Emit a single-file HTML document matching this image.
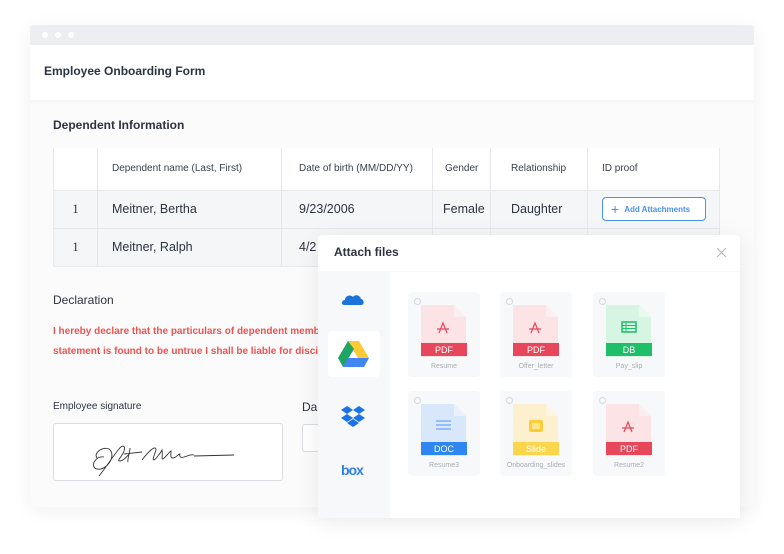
<!DOCTYPE html>
<html><head><meta charset="utf-8"><style>
*{margin:0;padding:0;box-sizing:border-box}
body{width:784px;height:554px;background:#fff;font-family:"Liberation Sans",sans-serif;position:relative;overflow:hidden;color:#2d3340}
.a{position:absolute}
.win{left:30px;top:25px;width:724px;height:482px;background:#fbfbfc;box-shadow:0 4px 20px rgba(0,0,0,.06);border-radius:3px}
.bar{left:30px;top:25px;width:724px;height:20px;background:#eceef1;border-radius:3px 3px 0 0}
.dot{width:6px;height:6px;border-radius:50%;background:#fff;top:32px}
.hdr{left:30px;top:45px;width:724px;height:55px;background:#fff;box-shadow:0 2px 4px rgba(0,0,0,.03)}
table{position:absolute;left:53px;top:148px;border-collapse:collapse;font-size:10.5px}
td{border:1px solid #e6e8eb;padding:0 0 0 14px;height:38px}
tr.h td{background:#fff;height:42px;border-top:none;color:#3a404b;font-size:10px}
tr.r td{background:#f4f6f7;font-size:12.5px;color:#2d3340}
td.n{text-align:center;padding:0;font-family:"Liberation Serif",serif;font-size:12px}
.card{width:72px;height:85px;background:#f7f8f9;border-radius:4px}
.card .rad{position:absolute;left:6px;top:6px;width:7px;height:7px;border:1px solid #d5d8dc;border-radius:50%}
.card .lbl{position:absolute;left:0;width:100%;top:71px;text-align:center;font-size:7px;color:#a8adb3}
</style></head><body>
<div class="a win"></div>
<div class="a bar"></div>
<div class="a dot" style="left:42px"></div><div class="a dot" style="left:55px"></div><div class="a dot" style="left:68px"></div>
<div class="a hdr"></div>
<div class="a" style="left:44px;top:64px;font-size:12px;font-weight:bold;color:#2d3340">Employee Onboarding Form</div>
<div class="a" style="left:53px;top:118px;font-size:12px;font-weight:bold">Dependent Information</div>
<table>
<tr class="h"><td style="width:44px;padding:0"></td><td style="width:184px">Dependent name (Last, First)</td><td style="width:151px;padding-left:17px">Date of birth (MM/DD/YY)</td><td style="width:58px;padding-left:12px">Gender</td><td style="width:97px;padding-left:20px">Relationship</td><td style="width:132px">ID proof</td></tr>
<tr class="r"><td class="n">1</td><td>Meitner, Bertha</td><td style="padding-left:17px">9/23/2006</td><td style="padding-left:10px">Female</td><td style="padding-left:20px">Daughter</td><td><div style="width:104px;height:24px;border:1px solid #4a90f2;border-radius:4px;background:#fff;color:#4a90f2;font-size:8px;font-weight:bold;line-height:22px;padding-left:8px"><span style="font-size:14px;font-weight:normal;vertical-align:-2px;margin-right:5px">+</span>Add Attachments</div></td></tr>
<tr class="r"><td class="n">1</td><td>Meitner, Ralph</td><td style="padding-left:17px">4/2</td><td></td><td></td><td></td></tr>
</table>
<div class="a" style="left:53px;top:293px;font-size:12px;color:#2d3340">Declaration</div>
<div class="a" style="left:53px;top:322px;font-size:10px;color:#f0524f;line-height:20px;font-weight:bold;white-space:nowrap;width:265px;overflow:hidden">I hereby declare that the particulars of dependent members<br>statement is found to be untrue I shall be liable for disciplinary</div>
<div class="a" style="left:53px;top:401px;font-size:10px">Employee signature</div>
<div class="a" style="left:302px;top:400px;font-size:12px">Da</div>
<div class="a" style="left:53px;top:423px;width:230px;height:58px;border:1px solid #d8dbe0;border-radius:3px;background:#fff">
<svg width="230" height="58" viewBox="0 0 230 58"><path d="M50 33c-8 -2 -15 10 -7 12c10 2 20 -14 12 -20c-6 -3 -16 4 -12 9M45 52c8 -10 14 -20 20 -27c3 -4 7 -4 5 2c-2 6 -8 10 -4 10c4 0 8 -6 10 -8M76 24c0 4 -3 12 -2 14M70 30l18 -2M88 36c6 -8 14 -16 14 -10c-2 6 -4 10 -2 10c3 -2 7 -8 8 -10c1 6 -1 9 1 9c3 -2 6 -7 8 -8c0 5 -1 7 2 7c3 0 5 -4 7 -4c-1 3 1 4 4 3c4 -1 6 -3 10 -2M140 32l40 -1" fill="none" stroke="#333" stroke-width="0.9"/></svg></div>
<div class="a" style="left:302px;top:424px;width:20px;height:28px;border:1px solid #d8dbe0;border-right:none;border-radius:3px 0 0 3px;background:#fff"></div>

<!-- dialog -->
<div class="a" style="left:318px;top:235px;width:422px;height:283px;background:#f7f8fa;box-shadow:0 4px 24px rgba(0,0,0,.08);border-radius:4px"></div>
<div class="a" style="left:318px;top:235px;width:422px;height:36px;background:#fff;border-radius:4px 4px 0 0"></div>
<div class="a" style="left:334px;top:245px;font-size:12px;font-weight:bold">Attach files</div>
<svg class="a" style="left:716px;top:247px" width="11" height="11"><path d="M1 1L10 10M10 1L1 10" stroke="#b8bcc2" stroke-width="1.2"/></svg>
<div class="a" style="left:390px;top:272px;width:350px;height:246px;background:#fff"></div>
<!-- sidebar icons -->
<svg class="a" style="left:341px;top:290px" width="24" height="16" viewBox="0 0 24 16"><path d="M3 15c-3 0 -3 -5 1 -5c0 -4 5 -6 8 -3c2 -3 7 -2 8 2c3 0 4 6 0 6z" fill="#1a73d9"/></svg>
<div class="a" style="left:328px;top:331px;width:52px;height:46px;background:#fff;border-radius:4px"></div>
<svg class="a" style="left:338px;top:340px" width="32" height="28" viewBox="0 0 32 28"><path d="M10 1h11l10 17h-11z" fill="#fdc935"/><path d="M10 1L0 18l5 9l11-18z" fill="#1fa463"/><path d="M5 27h21l5-9H10z" fill="#4285f4"/></svg>
<svg class="a" style="left:341px;top:406px" width="24" height="22" viewBox="0 0 24 22"><path d="M6 0l6 4-6 4-6-4zM18 0l6 4-6 4-6-4zM6 8l6 4-6 4-6-4zM18 8l6 4-6 4-6-4zM12 13l6 4-6 4-6-4z" fill="#1a73e8"/></svg>
<div class="a" style="left:341px;top:462px;font-size:14px;font-weight:bold;color:#2f80ed;letter-spacing:-1px">box</div>

<!-- cards -->
<div id="cards"></div>
<svg width="0" height="0" style="position:absolute"><defs>
<path id="pdf" d="M-4 6L0-4L4 6M-6 2h12" fill="none" stroke="#e8465b" stroke-width="1.2"/>
</defs></svg>
<!-- card template built inline -->
<div class="a card" style="left:408px;top:292px"><div class="rad"></div><svg class="a" style="left:13px;top:13px" width="46" height="52"><path d="M0 0h33l12 12v52H0z" fill="#fbe3e6"/><path d="M33 0v12h12" fill="#fdeff1"/><rect y="38" width="46" height="13" fill="#e8465b"/><text x="23" y="48" font-size="9" fill="#fff" text-anchor="middle" font-family="Liberation Sans">PDF</text><use href="#pdf" x="22" y="22"/></svg><div class="lbl">Resume</div></div>
<div class="a card" style="left:500px;top:292px"><div class="rad"></div><svg class="a" style="left:13px;top:13px" width="46" height="52"><path d="M0 0h33l12 12v52H0z" fill="#fbe3e6"/><path d="M33 0v12h12" fill="#fdeff1"/><rect y="38" width="46" height="13" fill="#e8465b"/><text x="23" y="48" font-size="9" fill="#fff" text-anchor="middle" font-family="Liberation Sans">PDF</text><use href="#pdf" x="22" y="22"/></svg><div class="lbl">Offer_letter</div></div>
<div class="a card" style="left:593px;top:292px"><div class="rad"></div><svg class="a" style="left:13px;top:13px" width="46" height="52"><path d="M0 0h33l12 12v52H0z" fill="#d7f5e3"/><path d="M33 0v12h12" fill="#e8faef"/><rect y="38" width="46" height="13" fill="#1fbf6a"/><text x="23" y="48" font-size="9" fill="#fff" text-anchor="middle" font-family="Liberation Sans">DB</text><rect x="16" y="17" width="14" height="10" fill="none" stroke="#1fbf6a" stroke-width="1.5"/><path d="M16 20.5h14M16 23.5h14M20 17v10" stroke="#1fbf6a"/></svg><div class="lbl">Pay_slip</div></div>
<div class="a card" style="left:408px;top:391px"><div class="rad"></div><svg class="a" style="left:13px;top:13px" width="46" height="52"><path d="M0 0h33l12 12v52H0z" fill="#d9e7fb"/><path d="M33 0v12h12" fill="#eaf1fd"/><rect y="38" width="46" height="13" fill="#2f86f0"/><text x="23" y="48" font-size="9" fill="#fff" text-anchor="middle" font-family="Liberation Sans">DOC</text><path d="M15 17h15M15 21h15M15 25h15" stroke="#6aa6f4" stroke-width="1.2"/></svg><div class="lbl">Resume3</div></div>
<div class="a card" style="left:500px;top:391px"><div class="rad"></div><svg class="a" style="left:13px;top:13px" width="46" height="52"><path d="M0 0h33l12 12v52H0z" fill="#fcf0cf"/><path d="M33 0v12h12" fill="#fdf6e3"/><rect y="38" width="46" height="13" fill="#fbd54b"/><text x="23" y="48" font-size="9" fill="#fff" text-anchor="middle" font-family="Liberation Sans">Slide</text><rect x="16" y="16" width="14" height="12" rx="2" fill="#fbcd3a"/><rect x="19" y="19" width="8" height="6" fill="#fde58a"/></svg><div class="lbl">Onboarding_slides</div></div>
<div class="a card" style="left:593px;top:391px"><div class="rad"></div><svg class="a" style="left:13px;top:13px" width="46" height="52"><path d="M0 0h33l12 12v52H0z" fill="#fbe3e6"/><path d="M33 0v12h12" fill="#fdeff1"/><rect y="38" width="46" height="13" fill="#e8465b"/><text x="23" y="48" font-size="9" fill="#fff" text-anchor="middle" font-family="Liberation Sans">PDF</text><use href="#pdf" x="22" y="22"/></svg><div class="lbl">Resume2</div></div>
</body></html>
